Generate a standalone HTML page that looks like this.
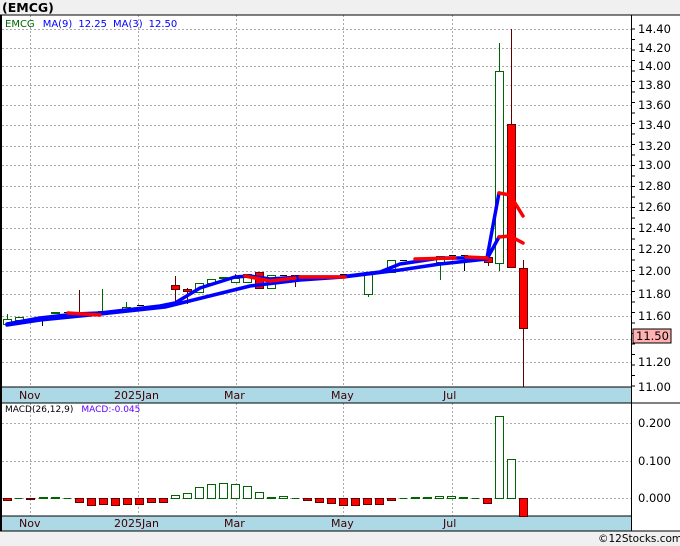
<!DOCTYPE html>
<html><head><meta charset="utf-8"><style>
html,body{margin:0;padding:0;background:#f0f0f0;}
svg{display:block;font-family:"DejaVu Sans","Liberation Sans",sans-serif;}
</style></head><body>
<svg id="s" width="680" height="546" viewBox="0 0 680 546" xmlns="http://www.w3.org/2000/svg">
<rect x="0" y="0" width="680" height="546" fill="#f0f0f0"/>
<rect x="0" y="15" width="632" height="516" fill="#fff"/>
<rect x="632" y="15" width="48" height="516" fill="#fff"/>
<text x="2" y="12" font-size="12.5" font-weight="bold" fill="#000">(EMCG)</text>
<g id="grid" stroke="#aaa" stroke-dasharray="2,2" stroke-width="1"></g>
<rect x="1" y="387" width="630" height="16" fill="#add8e6"/>
<rect x="1" y="516" width="630" height="15" fill="#add8e6"/>
<line x1="1" y1="387" x2="631" y2="387" stroke="#000"/>
<line x1="1" y1="403" x2="680" y2="403" stroke="#000"/>
<line x1="1" y1="516" x2="631" y2="516" stroke="#000"/>
<line x1="0" y1="531" x2="680" y2="531" stroke="#000"/>
<line x1="0" y1="15" x2="680" y2="15" stroke="#000"/>
<line x1="1" y1="15" x2="1" y2="531" stroke="#000" stroke-width="2"/>
<line x1="631.5" y1="15" x2="631.5" y2="531" stroke="#000"/>
<g id="cand"></g>
<g id="mas" fill="none" stroke-width="3.5" stroke-linejoin="round" stroke-linecap="round">
<polyline stroke="#0000ff" points="7,325 40,320 100,314 165,307 250,286 300,280 343,277 400,270 440,264 487,259 499,237"/>
<polyline stroke="#0000ff" points="7,324 40,318 75,314 100,313 160,306 175,303 200,288 235,277 250,276 270,279 300,277 340,277 380,272 400,264 440,258 487,258 499,193"/>
<polyline stroke="#ff0000" points="68,313 100,315"/>
<polyline stroke="#ff0000" points="245,276 270,281 295,278"/>
<polyline stroke="#ff0000" points="300,277 345,277"/>
<polyline stroke="#ff0000" points="415,259 455,258"/>
<polyline stroke="#ff0000" points="466,257 487,258"/>
<polyline stroke="#ff0000" points="499,193 510,195 523,216"/>
<polyline stroke="#ff0000" points="499,237 510,236 523,243"/>
</g>
<g id="macd"></g>
<g font-size="11.5" fill="#000">
<text x="638" y="33">14.40</text><text x="638" y="52">14.20</text><text x="638" y="70">14.00</text>
<text x="638" y="89">13.80</text><text x="638" y="109">13.60</text><text x="638" y="129">13.40</text>
<text x="638" y="150">13.20</text><text x="638" y="169">13.00</text><text x="638" y="190">12.80</text>
<text x="638" y="211">12.60</text><text x="638" y="232">12.40</text><text x="638" y="253">12.20</text>
<text x="638" y="275">12.00</text><text x="638" y="298">11.80</text><text x="638" y="320">11.60</text>
<text x="638" y="366">11.20</text><text x="638" y="391">11.00</text>
<text x="638" y="427">0.200</text><text x="638" y="465">0.100</text><text x="638" y="502">0.000</text>
</g>
<rect x="633" y="329" width="38" height="14" fill="#ffb0b0" stroke="#000"/>
<text x="636" y="340" font-size="11.5" fill="#000">11.50</text>
<g font-size="11" fill="#400000">
<text x="19" y="399">Nov</text><text x="114" y="399">2025Jan</text><text x="224" y="399">Mar</text><text x="331" y="399">May</text><text x="443" y="399">Jul</text>
<text x="19" y="527">Nov</text><text x="114" y="527">2025Jan</text><text x="224" y="527">Mar</text><text x="331" y="527">May</text><text x="443" y="527">Jul</text>
</g>
<text x="5" y="27" font-size="10"><tspan fill="#006400">EMCG</tspan><tspan fill="#0000ff" dx="8">MA(9)</tspan><tspan fill="#0000ff" dx="6">12.25</tspan><tspan fill="#0000ff" dx="6">MA(3)</tspan><tspan fill="#0000ff" dx="6">12.50</tspan></text>
<text x="5" y="412" font-size="9"><tspan fill="#000">MACD(26,12,9)</tspan><tspan fill="#6600ff" dx="8">MACD:-0.045</tspan></text>
<text x="598" y="542" font-size="10.5" fill="#000">©12Stocks.com</text>
</svg>
<script>
var NS="http://www.w3.org/2000/svg";
function el(p,t,a){var e=document.createElementNS(NS,t);for(var k in a)e.setAttribute(k,a[k]);p.appendChild(e);return e;}
var g=document.getElementById('grid');
[29,48,66,85,105,125,146,165,186,207,228,249,271,294,316,339,362,423,461,498].forEach(function(y){el(g,'line',{x1:2,y1:y+.5,x2:631,y2:y+.5});});
[30,138,236,343,452].forEach(function(x){el(g,'line',{x1:x+.5,y1:15,x2:x+.5,y2:387});el(g,'line',{x1:x+.5,y1:403,x2:x+.5,y2:516});});
for(var y=29;y<387;y+=10.5){el(g,'line',{x1:631,y1:y,x2:635,y2:y,stroke:'#000','stroke-dasharray':'none'});}
var c=document.getElementById('cand');
var C=[[7,319,324,314,324,'g'],[19,317,320,317,320,'g'],[42,320,321,318,326,'t'],[55,312,313,312,313,'g'],[67,312,313,312,313,'d'],
[79,312,316,290,316,'r'],[102,311,314,289,314,'g'],[114,312,313,312,313,'d'],[126,307,311,302,311,'g'],[140,305,306,305,306,'d'],[152,306,307,306,307,'d'],
[175,285,289,276,304,'r'],[187,289,291,288,304,'r'],[199,283,292,283,292,'g'],[211,279,283,279,283,'g'],[223,277,278,277,278,'g'],[235,278,282,274,282,'g'],
[247,274,282,274,282,'g'],[259,272,288,272,288,'r'],[271,275,288,275,288,'g'],[283,275,276,275,276,'d'],[295,275,278,275,287,'r'],
[343,274,275,274,275,'d'],[368,272,294,272,297,'g'],[391,260,272,260,272,'g'],[403,260,261,260,261,'d'],[440,256,262,256,280,'g'],[452,255,256,255,256,'d'],[464,255,256,255,271,'t'],
[488,257,262,257,266,'r'],[499,71,263,43,271,'g'],[511,124,267,29,267,'r'],[523,268,328,260,387,'r']];
C.forEach(function(d){var x=d[0],col=d[5];
 var wc=col=='r'?'#600000':(col=='g'?'#006400':'#000');
 el(c,'line',{x1:x+.5,y1:d[3],x2:x+.5,y2:d[4],stroke:wc});
 if(col=='d'||col=='t'){el(c,'line',{x1:x-3,y1:d[1]+.5,x2:x+4,y2:d[1]+.5,stroke:'#000'});return;}
 el(c,'rect',{x:x-3.5,y:d[1]+.5,width:8,height:Math.max(1,d[2]-d[1]),fill:col=='r'?'#ff0000':'#fff',stroke:col=='r'?'#600000':'#006400'});
});
var m=document.getElementById('macd');
var M=[[7,2],[18,0],[30,1],[43,-1],[55,-1],[67,0],[79,4],[91,7],[103,6],[115,7],[127,6],[139,6],[151,4],[163,4],[175,-3],[187,-5],[199,-11],[211,-14],[223,-15],[235,-14],[247,-12],[259,-6],[271,-1],[283,-2],[295,0],[307,2],[319,4],[331,5],[343,7],[355,7],[367,6],[379,6],[391,2],[403,0],[415,-1],[427,-1],[439,-2],[451,-2],[463,-1],[475,0],[487,5],[499,-82],[511,-39],[523,18]];
M.forEach(function(d){var x=d[0],h=d[1];
 if(h==0){el(m,'line',{x1:x-3,y1:498.5,x2:x+4,y2:498.5,stroke:'#006400'});return;}
 if(h<0)el(m,'rect',{x:x-3.5,y:498.5+h,width:8,height:-h,fill:'#fff',stroke:'#006400'});
 else el(m,'rect',{x:x-3.5,y:498.5,width:8,height:h,fill:'#ff0000',stroke:'#600000'});
});
</script>
</body></html>
